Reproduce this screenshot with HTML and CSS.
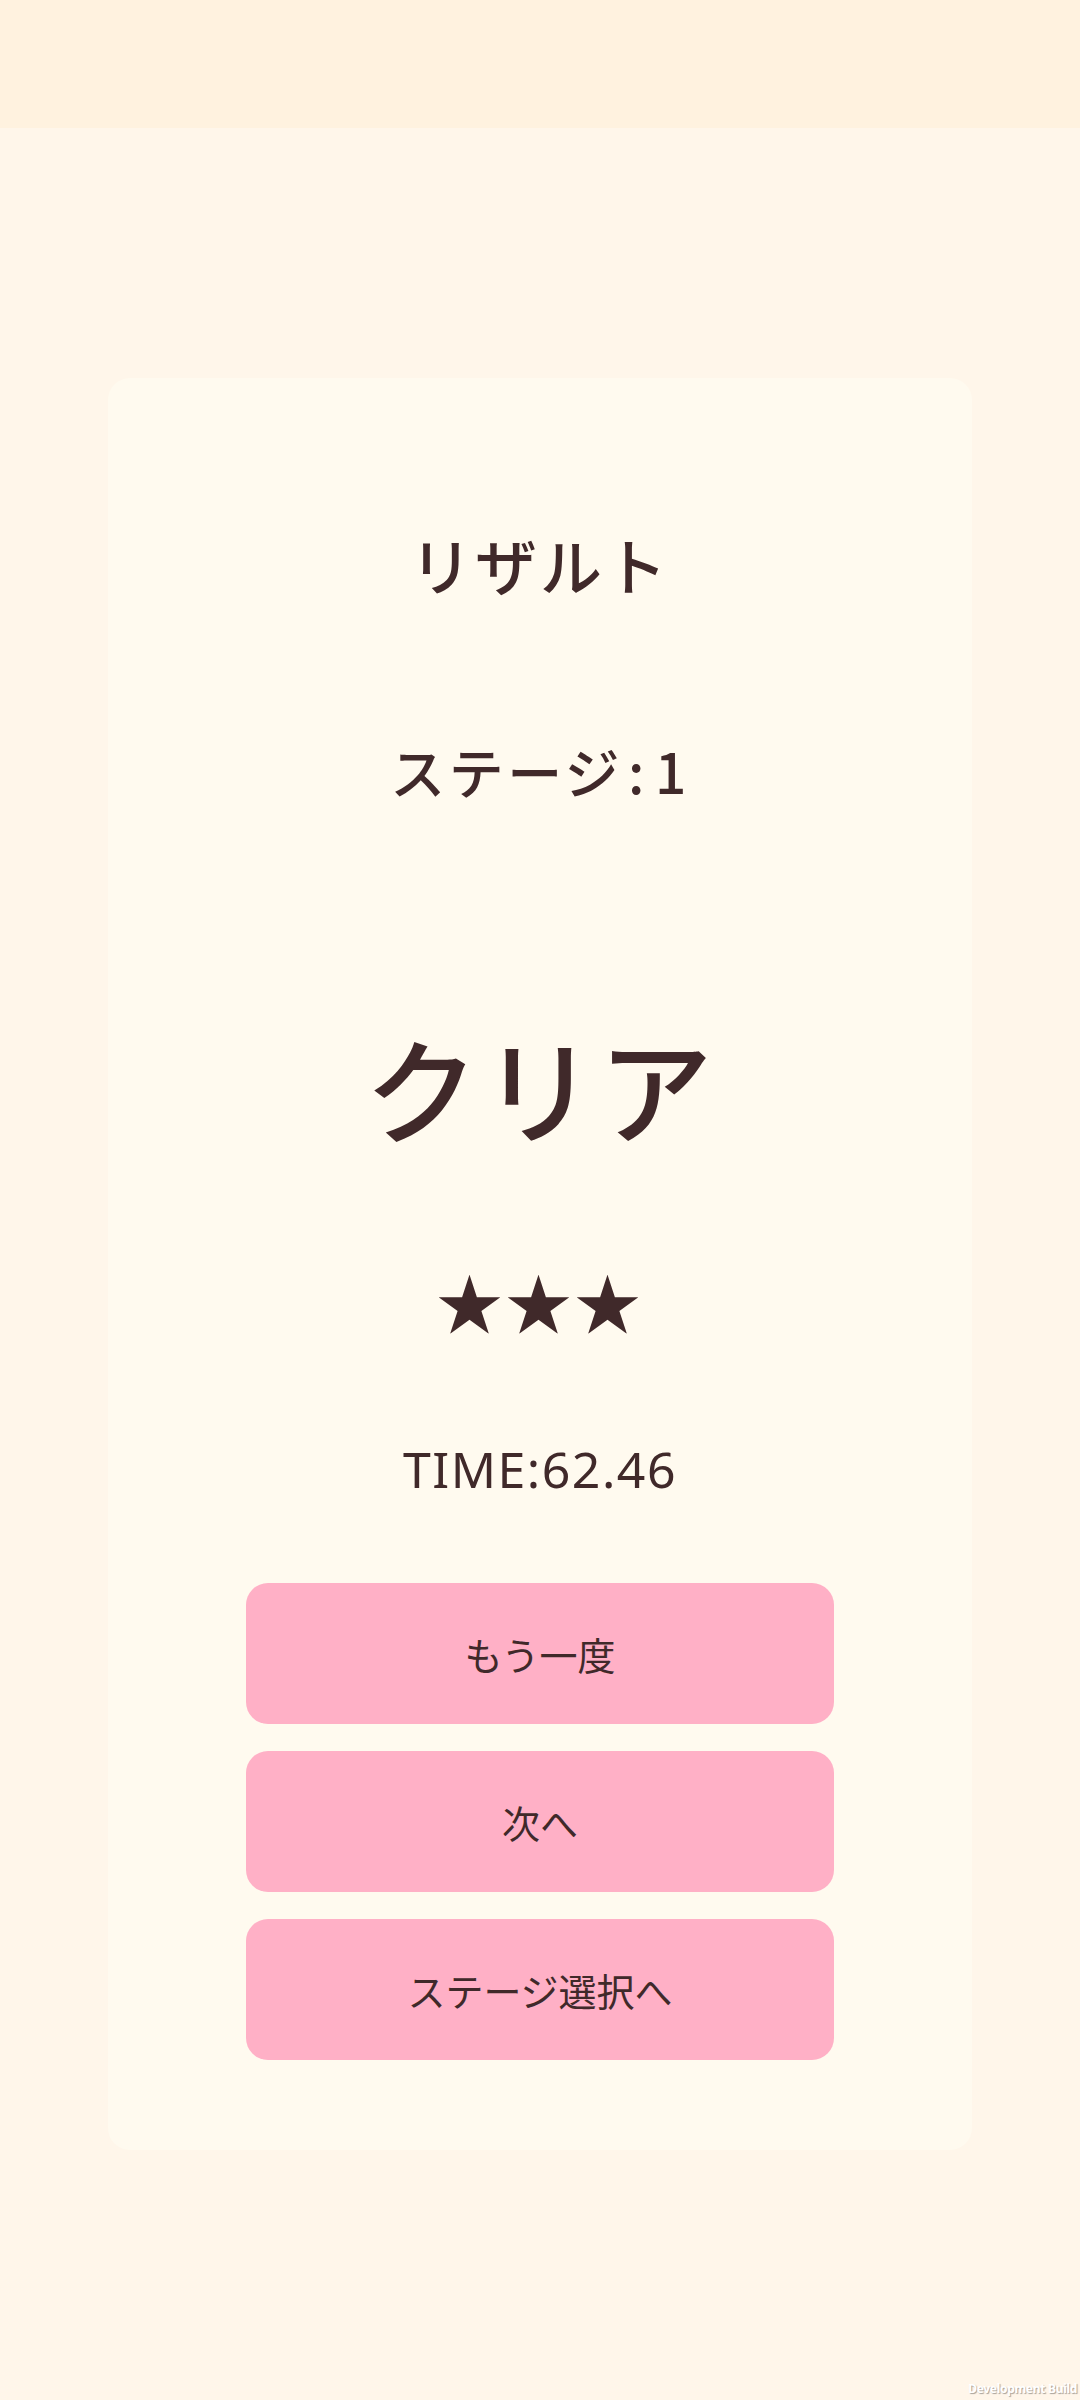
FILE: index.html
```html
<!DOCTYPE html>
<html lang="ja">
<head>
<meta charset="utf-8">
<title>リザルト</title>
<link rel="stylesheet" href="styles.css">
</head>
<body>
<header class="topbar"></header>
<main class="screen">
  <section class="card">
    <h1 class="title">リザルト</h1>
    <p class="stage">ステージ<span class="colon">:</span>1</p>
    <p class="result">クリア</p>
    <p class="stars">★★★</p>
    <p class="time">TIME:62.46</p>
    <div class="actions">
      <button class="btn">もう一度</button>
      <button class="btn">次へ</button>
      <button class="btn">ステージ選択へ</button>
    </div>
  </section>
</main>
<div class="devbuild">Development Build</div>
</body>
</html>
```

FILE: styles.css
```css
html, body {
  margin: 0;
  padding: 0;
}
body {
  width: 1080px;
  min-height: 2400px;
  background: #FFF6EA;
  font-family: "Noto Sans CJK JP", "Noto Sans", sans-serif;
  color: #40292A;
  position: relative;
}
.topbar {
  height: 128px;
  background: #FFF2DF;
}
.screen {
  padding-top: 250px;
  display: flex;
  justify-content: center;
}
.card {
  width: 864px;
  box-sizing: border-box;
  background: #FFFAEF;
  border-radius: 22px;
  padding: 146px 0 90px;
  display: flex;
  flex-direction: column;
  align-items: center;
}
.title, .stage, .result, .stars, .time {
  margin: 0;
  font-weight: 500;
  text-align: center;
}
.title {
  font-size: 62px;
  line-height: 80px;
  letter-spacing: 3px;
}
.stage {
  margin-top: 126px;
  font-size: 55px;
  line-height: 80px;
  letter-spacing: 3.5px;
}
.colon {
  margin: 0 7px 0 5px;
}
.result {
  margin-top: 206px;
  font-size: 114px;
  line-height: 140px;
  letter-spacing: 3px;
}
.stars {
  margin-top: 104px;
  font-size: 66px;
  line-height: 80px;
  letter-spacing: 3px;
}
.time {
  margin-top: 97px;
  font-family: "Noto Sans", sans-serif;
  font-weight: 400;
  font-size: 50px;
  line-height: 64px;
  letter-spacing: 1.5px;
}
.actions {
  margin-top: 82px;
  display: flex;
  flex-direction: column;
  gap: 27px;
}
.btn {
  width: 588px;
  height: 141px;
  border: none;
  border-radius: 22px;
  background: #FFB0C6;
  color: #40292A;
  font-family: "Noto Sans CJK JP", "Noto Sans", sans-serif;
  font-size: 38px;
  font-weight: 400;
  padding: 0;
}
.devbuild {
  position: absolute;
  right: 3px;
  top: 2380px;
  font-family: "Noto Sans", sans-serif;
  font-weight: 700;
  font-size: 12px;
  letter-spacing: -0.3px;
  color: #FFFFFF;
  text-shadow: 1px 1px 1px rgba(0,0,0,0.35);
}
```
